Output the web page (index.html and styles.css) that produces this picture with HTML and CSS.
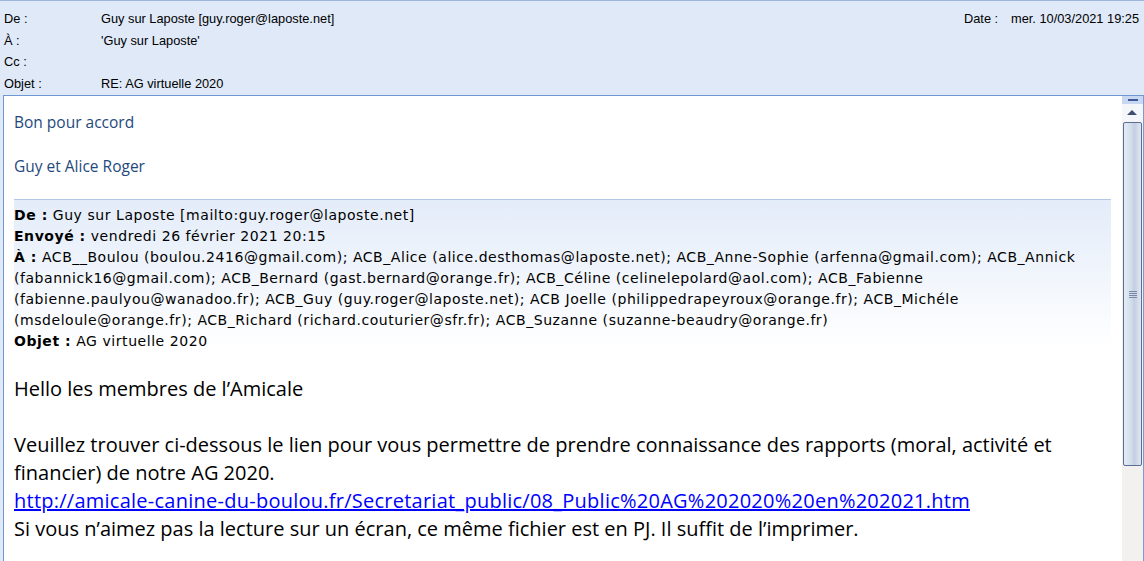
FILE: index.html
```html
<!DOCTYPE html>
<html lang="fr">
<head>
  <meta charset="UTF-8">
  <title>RE: AG virtuelle 2020</title>
  <link rel="stylesheet" href="styles.css">
</head>
<body>

  <div class="entete">
    <div class="champs">
      <div class="ligne"><span class="etiquette">De :</span><span>Guy sur Laposte [guy.roger@laposte.net]</span></div>
      <div class="ligne"><span class="etiquette">À :</span><span>'Guy sur Laposte'</span></div>
      <div class="ligne"><span class="etiquette">Cc :</span><span></span></div>
      <div class="ligne"><span class="etiquette">Objet :</span><span>RE: AG virtuelle 2020</span></div>
    </div>
    <div class="date"><span class="etiquette-date">Date :</span><span>mer. 10/03/2021 19:25</span></div>
  </div>

  <div class="cadre">
    <div class="message">
      <p class="reponse">Bon pour accord</p>
      <p class="reponse">Guy et Alice Roger</p>

      <div class="origine">
        <div><b>De :</b> Guy sur Laposte [mailto:guy.roger@laposte.net]</div>
        <div><b>Envoyé :</b> vendredi 26 février 2021 20:15</div>
        <div><b>À :</b> ACB__Boulou (boulou.2416@gmail.com); ACB_Alice (alice.desthomas@laposte.net); ACB_Anne-Sophie (arfenna@gmail.com); ACB_Annick (fabannick16@gmail.com); ACB_Bernard (gast.bernard@orange.fr); ACB_Céline (celinelepolard@aol.com); ACB_Fabienne (fabienne.paulyou@wanadoo.fr); ACB_Guy (guy.roger@laposte.net); ACB Joelle (philippedrapeyroux@orange.fr); ACB_Michéle (msdeloule@orange.fr); ACB_Richard (richard.couturier@sfr.fr); ACB_Suzanne (suzanne-beaudry@orange.fr)</div>
        <div><b>Objet :</b> AG virtuelle 2020</div>
      </div>

      <div class="texte">
        <p>Hello les membres de l’Amicale</p>
        <p>&nbsp;</p>
        <p>Veuillez trouver ci-dessous le lien pour vous permettre de prendre connaissance des rapports (moral, activité et financier) de notre AG 2020.</p>
        <p><a href="#">http://amicale-canine-du-boulou.fr/Secretariat_public/08_Public%20AG%202020%20en%202021.htm</a></p>
        <p>Si vous n’aimez pas la lecture sur un écran, ce même fichier est en PJ. Il suffit de l’imprimer.</p>
      </div>
    </div>

    <div class="defilement">
      <div class="bouton-haut"><span class="tiret"></span></div>
      <div class="fleche"></div>
      <div class="curseur"><span class="prise"></span></div>
      <div class="piste"></div>
    </div>
  </div>

</body>
</html>
```

FILE: styles.css
```css
/* Général */
body {
  margin: 0;
  height: 561px;
  overflow: hidden;
  background-color: #dfe9f8;
  font-family: "DejaVu Sans", Verdana, sans-serif;
  color: #000000;
  display: flex;
  flex-direction: column;
}

/* En-tête du message */
.entete {
  border-top: 1px solid #9db7de;
  height: 94px;
  display: flex;
  justify-content: space-between;
  font-family: "Liberation Sans", Arial, sans-serif;
  font-size: 12.8px;
}

.champs {
  padding-top: 10px;
  padding-left: 4px;
}

.ligne {
  display: flex;
  height: 21.7px;
}

.etiquette {
  width: 97px;
}

.date {
  padding-top: 10px;
  white-space: nowrap;
  width: 180px;
}

.etiquette-date {
  display: inline-block;
  width: 47px;
}

/* Cadre du corps */
.cadre {
  flex: 1;
  margin-left: 3px;
  background-color: #ffffff;
  border-top: 1px solid #6f97d2;
  border-left: 1px solid #6f97d2;
  display: flex;
  min-height: 0;
}

.message {
  flex: 1;
  padding: 0 10px 0 10px;
  overflow: hidden;
}

.reponse {
  font-family: "Open Sans", sans-serif;
  font-size: 15.5px;
  color: #1f497d;
  margin: 0;
  line-height: 22px;
  padding-top: 15px;
  height: 29px;
}

/* Message d'origine */
.origine {
  margin-top: 15px;
  border-top: 1px solid #b5c7e6;
  padding-top: 5px;
  background: linear-gradient(#e3ecf9, #ffffff 150px);
  font-family: "DejaVu Sans", Verdana, sans-serif;
  font-size: 14px;
  line-height: 21px;
  letter-spacing: 0.55px;
}

.texte {
  font-family: "Open Sans", sans-serif;
  font-size: 20px;
  line-height: 28px;
  padding-top: 23px;
}

.texte p {
  margin: 0;
}

.texte a {
  color: #0000ff;
  letter-spacing: 0.25px;
}

/* Barre de défilement */
.defilement {
  width: 21px;
  margin-left: 1px;
  border-right: 1px solid #7a9bd4;
  display: flex;
  flex-direction: column;
  background-color: #f0f0f0;
}

.bouton-haut {
  height: 8px;
  background-color: #c8d8f2;
  display: flex;
  justify-content: center;
  align-items: center;
}

.tiret {
  width: 10px;
  height: 2px;
  background-color: #3c5a96;
}

.fleche {
  height: 18px;
  background-color: #f4f6fa;
  position: relative;
}

.fleche::after {
  content: "";
  position: absolute;
  left: 5px;
  top: 6px;
  border-left: 5px solid transparent;
  border-right: 5px solid transparent;
  border-bottom: 5px solid #3d4e6e;
}

.curseur {
  height: 342px;
  margin: 0 1px;
  border: 1px solid #5b6d94;
  border-radius: 2px;
  background: linear-gradient(to right, #e4ebf5, #d4dfed 40%, #c3d0e2 60%, #dfe6f0);
  display: flex;
  justify-content: center;
  align-items: center;
}

.prise {
  width: 8px;
  height: 7px;
  background: repeating-linear-gradient(#7a8aa6 0 1px, transparent 1px 2px);
}

.piste {
  flex: 1;
  background-color: #f2f1f0;
}
```
